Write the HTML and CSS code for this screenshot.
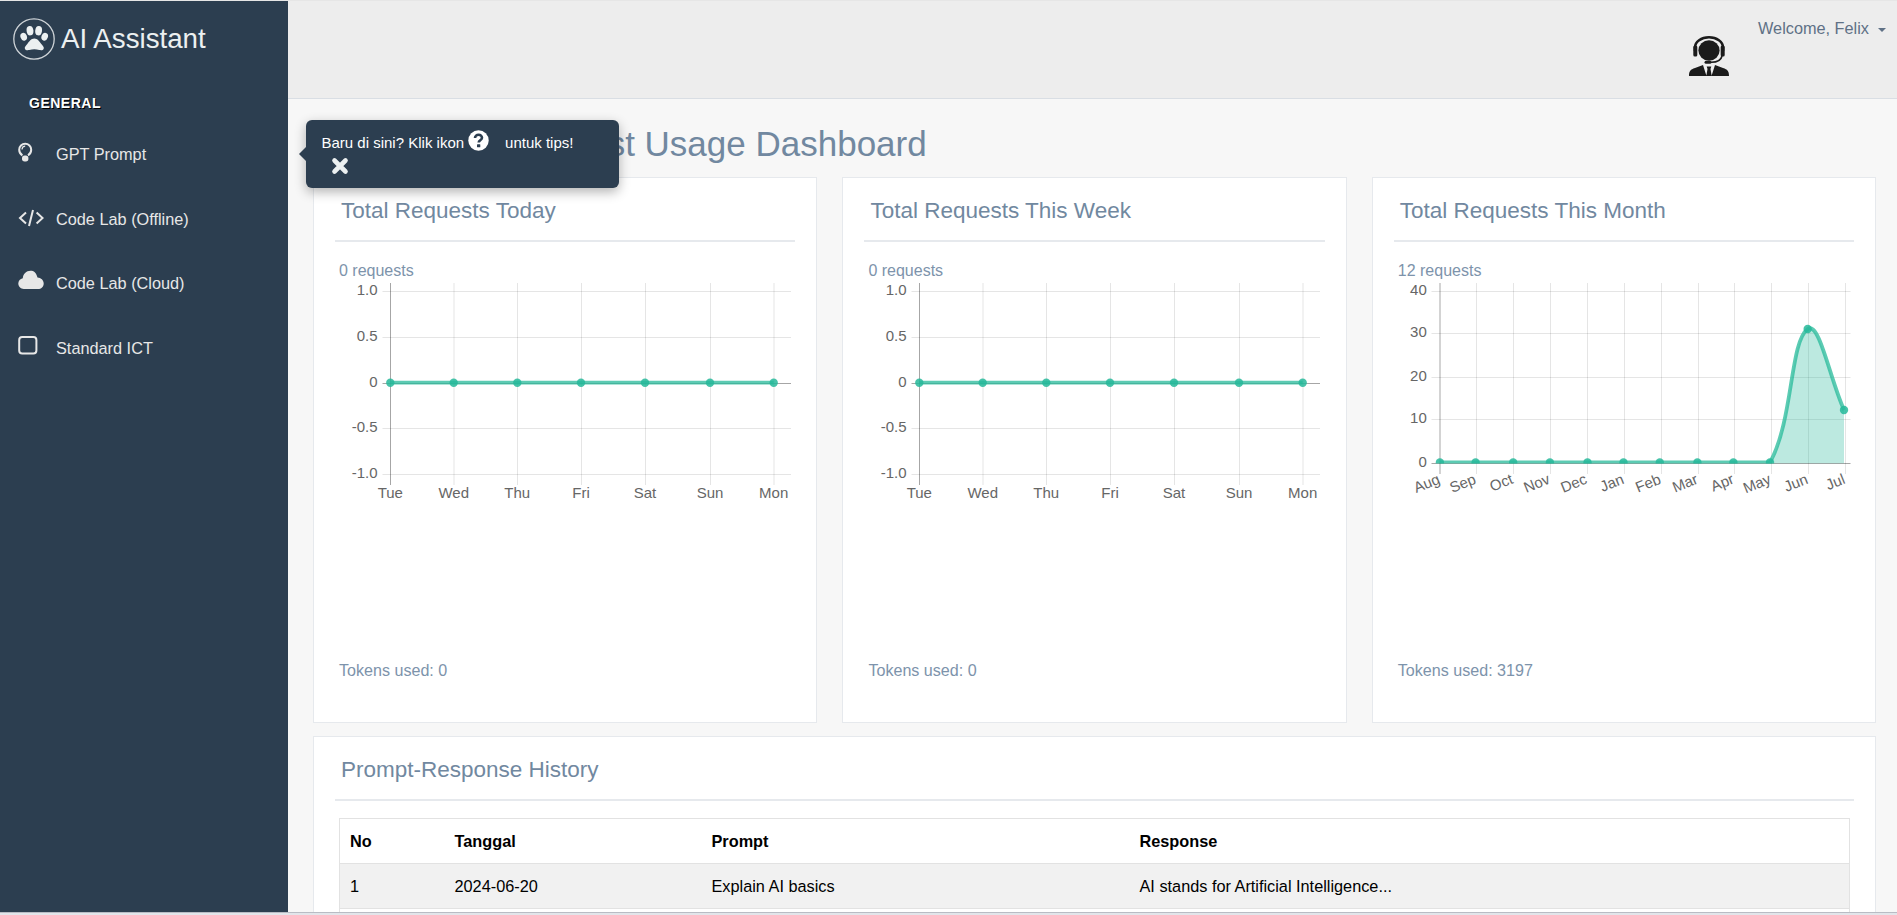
FILE: index.html
```html
<!DOCTYPE html>
<html>
<head>
    <title>AI Assistant</title>
    <meta charset="UTF-8">
    <meta name="viewport" content="width=device-width, initial-scale=1.0">
    <link rel="stylesheet" href="styles.css">
</head>
<body>
<div class="top-edge"></div>
<div class="app">
    <aside class="sidebar">
        <div class="brand">
            <svg class="brand-logo" width="42" height="42" viewBox="0 0 42 42">
                <circle class="brand-ring" cx="21" cy="21" r="20.2"/>
                <ellipse cx="10.7" cy="18.7" rx="3.2" ry="4" transform="rotate(-20 10.7 18.7)"/>
                <ellipse cx="17" cy="12.7" rx="3.4" ry="4.7" transform="rotate(-8 17 12.7)"/>
                <ellipse cx="25.6" cy="12.7" rx="3.4" ry="4.7" transform="rotate(8 25.6 12.7)"/>
                <ellipse cx="31.7" cy="18.7" rx="3.2" ry="4" transform="rotate(20 31.7 18.7)"/>
                <path d="M21.3 20.5c3.3 0 5 3 7 5.5 1.5 1.9 3 3 2.4 4.7-.6 1.6-2.5 1.6-4.4 1.3-1.8-.3-3.3-.7-5-.7s-3.2.4-5 .7c-1.9.3-3.8.3-4.4-1.3-.6-1.7.9-2.8 2.4-4.7 2-2.5 3.7-5.500 7-5.500z"/>
            </svg>
            <span class="brand-name">AI Assistant</span>
        </div>
        <h3 class="menu-title">GENERAL</h3>
        <ul class="menu">
            <li class="menu-item">
                <svg class="menu-icon" width="26" height="26" viewBox="0 0 26 26">
                    <path class="icon-line" d="M4.4 14.4C2.3 13 1.2 11 1.2 8.700a6 6 0 0 1 12 0c0 2.300-1.100 4.300-3.200 5.700"/>
                    <path class="icon-line thin" d="M7.200 5.200a3.300 3.300 0 0 0-3.200 3.200"/>
                    <rect class="icon-fill" x="4" y="14.600" width="6.400" height="5.800" rx="2.600"/>
                </svg>
                <span>GPT Prompt</span>
            </li>
            <li class="menu-item">
                <svg class="menu-icon" width="26" height="26" viewBox="0 0 26 26">
                    <path class="icon-line" d="M8 6.500 2 12l6 5.500M18.600 6.500l6 5.500-6 5.500M15 4l-4 16"/>
                </svg>
                <span>Code Lab (Offline)</span>
            </li>
            <li class="menu-item">
                <svg class="menu-icon" width="26" height="26" viewBox="0 0 26 26">
                    <path class="icon-fill" d="M5.800 19C2.700 19 .3 16.600.3 13.600c0-2.700 1.900-4.900 4.500-5.400C5 4 8.300.7 12.500.7c3.200 0 5.900 1.900 7 6.900 3.500.2 6.200 2.800 6.200 5.800 0 3.100-2.500 5.600-5.700 5.600z"/>
                </svg>
                <span>Code Lab (Cloud)</span>
            </li>
            <li class="menu-item">
                <svg class="menu-icon" width="26" height="26" viewBox="0 0 26 26">
                    <rect class="icon-line" x="1.200" y="2" width="17.200" height="16.400" rx="3"/>
                </svg>
                <span>Standard ICT</span>
            </li>
        </ul>
    </aside>

    <main class="main">
        <header class="topbar">
            <svg class="agent" width="40" height="40" viewBox="0 0 40 40">
                <path class="agent-band" d="M6 15v-3.500a14 10.200 0 0 1 28 0V15"/>
                <rect x="4.300" y="9.500" width="4" height="11" rx="1.500"/>
                <rect x="31.700" y="9.500" width="4" height="11" rx="1.500"/>
                <ellipse cx="20" cy="14.500" rx="10.600" ry="10.200"/>
                <path class="agent-boom" d="M33 20c-1 4.500-6 6.500-12 6.200"/>
                <rect x="15.500" y="24.800" width="7" height="3" rx="1.500"/>
                <path d="M0 40c0-5 1.500-6.500 6-8l8-3 3.500 11zM40 40c0-5-1.500-6.500-6-8l-8-3-3.500 11zM17.700 30.500h4.600l-.8 2.500 1.200 7h-5.400l1.200-7z"/>
            </svg>
            <div class="user-menu">Welcome, Felix<span class="caret"></span></div>
        </header>

        <div class="tip">
            <div class="tip-text">
                <span>Baru di sini? Klik ikon</span>
                <svg class="tip-help" width="21" height="21" viewBox="0 0 21 21">
                    <circle cx="10.500" cy="10.500" r="10.200"/>
                    <path class="tip-help-mark" d="M7 8c0-2 1.600-3.200 3.600-3.200S14 6 14 7.800c0 2.400-3.300 2.500-3.300 4.700"/>
                    <rect class="tip-help-dot" x="9" y="14.200" width="3.300" height="3" rx=".5"/>
                </svg>
                <span>untuk tips!</span>
            </div>
            <svg class="tip-close" width="18" height="18" viewBox="0 0 18 18">
                <path d="M3.500 3.500l11 11M14.500 3.500l-11 11"/>
            </svg>
        </div>

        <section class="content">
            <h1 class="page-title">Request Usage Dashboard</h1>

            <div class="cards">
                <div class="card">
                    <h2 class="card-title">Total Requests Today</h2>
                    <div class="count">0 requests</div>
                    <svg class="chart" width="460" height="230" viewBox="0 0 460 230">
                        <path class="grid" d="M47.500 8.500H456M47.500 54.500H456M47.500 145.500H456M47.500 191.500H456M119 0v202M182.500 0v202M246.500 0v202M310.500 0v202M375.500 0v202M439 0v202"/>
                        <path class="axis" d="M47.500 100.500H456M55.500 0v202"/>
                        <text class="tick end" x="42.500" y="12">1.0</text>
                        <text class="tick end" x="42.500" y="57.700">0.5</text>
                        <text class="tick end" x="42.500" y="103.700">0</text>
                        <text class="tick end" x="42.500" y="149.300">-0.5</text>
                        <text class="tick end" x="42.500" y="195">-1.0</text>
                        <text class="tick mid" x="55.300" y="215">Tue</text>
                        <text class="tick mid" x="118.700" y="215">Wed</text>
                        <text class="tick mid" x="182.300" y="215">Thu</text>
                        <text class="tick mid" x="246" y="215">Fri</text>
                        <text class="tick mid" x="310" y="215">Sat</text>
                        <text class="tick mid" x="375" y="215">Sun</text>
                        <text class="tick mid" x="438.700" y="215">Mon</text>
                        <path class="series" d="M55.300 99.700H438.700"/>
                        <circle class="dot" cx="55.300" cy="99.700" r="4.200"/>
                        <circle class="dot" cx="118.700" cy="99.700" r="4.200"/>
                        <circle class="dot" cx="182.300" cy="99.700" r="4.200"/>
                        <circle class="dot" cx="246" cy="99.700" r="4.200"/>
                        <circle class="dot" cx="310" cy="99.700" r="4.200"/>
                        <circle class="dot" cx="375" cy="99.700" r="4.200"/>
                        <circle class="dot" cx="438.700" cy="99.700" r="4.200"/>
                    </svg>
                    <div class="tokens">Tokens used: 0</div>
                </div>

                <div class="card">
                    <h2 class="card-title">Total Requests This Week</h2>
                    <div class="count">0 requests</div>
                    <svg class="chart" width="460" height="230" viewBox="0 0 460 230">
                        <path class="grid" d="M47.500 8.500H456M47.500 54.500H456M47.500 145.500H456M47.500 191.500H456M119 0v202M182.500 0v202M246.500 0v202M310.500 0v202M375.500 0v202M439 0v202"/>
                        <path class="axis" d="M47.500 100.500H456M55.500 0v202"/>
                        <text class="tick end" x="42.500" y="12">1.0</text>
                        <text class="tick end" x="42.500" y="57.700">0.5</text>
                        <text class="tick end" x="42.500" y="103.700">0</text>
                        <text class="tick end" x="42.500" y="149.300">-0.5</text>
                        <text class="tick end" x="42.500" y="195">-1.0</text>
                        <text class="tick mid" x="55.300" y="215">Tue</text>
                        <text class="tick mid" x="118.700" y="215">Wed</text>
                        <text class="tick mid" x="182.300" y="215">Thu</text>
                        <text class="tick mid" x="246" y="215">Fri</text>
                        <text class="tick mid" x="310" y="215">Sat</text>
                        <text class="tick mid" x="375" y="215">Sun</text>
                        <text class="tick mid" x="438.700" y="215">Mon</text>
                        <path class="series" d="M55.300 99.700H438.700"/>
                        <circle class="dot" cx="55.300" cy="99.700" r="4.200"/>
                        <circle class="dot" cx="118.700" cy="99.700" r="4.200"/>
                        <circle class="dot" cx="182.300" cy="99.700" r="4.200"/>
                        <circle class="dot" cx="246" cy="99.700" r="4.200"/>
                        <circle class="dot" cx="310" cy="99.700" r="4.200"/>
                        <circle class="dot" cx="375" cy="99.700" r="4.200"/>
                        <circle class="dot" cx="438.700" cy="99.700" r="4.200"/>
                    </svg>
                    <div class="tokens">Tokens used: 0</div>
                </div>

                <div class="card">
                    <h2 class="card-title">Total Requests This Month</h2>
                    <div class="count">12 requests</div>
                    <svg class="chart" width="460" height="230" viewBox="0 0 460 230">
                        <defs>
                            <clipPath id="plot-month"><rect x="40" y="0" width="420" height="180.500"/></clipPath>
                        </defs>
                        <path class="grid" d="M37.500 8.500H456.500M37.500 50.500H456.500M37.500 94.500H456.500M37.500 136.500H456.500M82.500 0v191M119.500 0v191M156.500 0v191M193.500 0v191M230.500 0v191M267.500 0v191M304.500 0v191M340.500 0v191M377.500 0v191M414.500 0v191M451.500 0v191"/>
                        <path class="axis" d="M37.500 180.500H456.500M46 0v191"/>
                        <text class="tick end" x="32.800" y="12">40</text>
                        <text class="tick end" x="32.800" y="54.300">30</text>
                        <text class="tick end" x="32.800" y="98.300">20</text>
                        <text class="tick end" x="32.800" y="140.300">10</text>
                        <text class="tick end" x="32.800" y="184.300">0</text>
                        <text class="tick end" transform="translate(47 200) rotate(-22)">Aug</text>
                        <text class="tick end" transform="translate(83 200) rotate(-22)">Sep</text>
                        <text class="tick end" transform="translate(120 200) rotate(-22)">Oct</text>
                        <text class="tick end" transform="translate(157 200) rotate(-22)">Nov</text>
                        <text class="tick end" transform="translate(194 200) rotate(-22)">Dec</text>
                        <text class="tick end" transform="translate(231 200) rotate(-22)">Jan</text>
                        <text class="tick end" transform="translate(268 200) rotate(-22)">Feb</text>
                        <text class="tick end" transform="translate(305 200) rotate(-22)">Mar</text>
                        <text class="tick end" transform="translate(341 200) rotate(-22)">Apr</text>
                        <text class="tick end" transform="translate(378 200) rotate(-22)">May</text>
                        <text class="tick end" transform="translate(415 200) rotate(-22)">Jun</text>
                        <text class="tick end" transform="translate(452 200) rotate(-22)">Jul</text>
                        <g clip-path="url(#plot-month)">
                            <path class="area" d="M376 180.500C399.500 137 395.700 58.800 413.700 46 425.200 37.800 435.500 94.600 450 127V180.500Z"/>
                            <path class="series" d="M45.900 179.500H376C399.500 137 395.700 58.800 413.700 46 425.200 37.800 435.500 94.600 450 127"/>
                            <circle class="dot" cx="45.900" cy="179.500" r="4.200"/>
                            <circle class="dot" cx="81.600" cy="179.500" r="4.200"/>
                            <circle class="dot" cx="119.200" cy="179.500" r="4.200"/>
                            <circle class="dot" cx="155.900" cy="179.500" r="4.200"/>
                            <circle class="dot" cx="193.500" cy="179.500" r="4.200"/>
                            <circle class="dot" cx="229.500" cy="179.500" r="4.200"/>
                            <circle class="dot" cx="265.800" cy="179.500" r="4.200"/>
                            <circle class="dot" cx="303.400" cy="179.500" r="4.200"/>
                            <circle class="dot" cx="339.400" cy="179.500" r="4.200"/>
                            <circle class="dot" cx="376" cy="179.500" r="4.200"/>
                            <circle class="dot" cx="413.700" cy="46" r="4.200"/>
                            <circle class="dot" cx="450" cy="127" r="4.200"/>
                        </g>
                    </svg>
                    <div class="tokens">Tokens used: 3197</div>
                </div>
            </div>

            <div class="panel">
                <h2 class="card-title">Prompt-Response History</h2>
                <table class="history">
                    <thead>
                        <tr>
                            <th class="col-no">No</th>
                            <th class="col-date">Tanggal</th>
                            <th class="col-prompt">Prompt</th>
                            <th>Response</th>
                        </tr>
                    </thead>
                    <tbody>
                        <tr>
                            <td>1</td>
                            <td>2024-06-20</td>
                            <td>Explain AI basics</td>
                            <td>AI stands for Artificial Intelligence...</td>
                        </tr>
                        <tr>
                            <td>&nbsp;</td>
                            <td></td>
                            <td></td>
                            <td></td>
                        </tr>
                    </tbody>
                </table>
            </div>
        </section>
    </main>
</div>
<div class="bottom-edge"></div>
</body>
</html>
```

FILE: styles.css
```css
* {
  box-sizing: border-box;
}
html, body {
  height: 100%;
}
body {
  margin: 0;
  display: flex;
  flex-direction: column;
  overflow: hidden;
  font-family: "Liberation Sans", Arial, sans-serif;
  font-size: 16.3px;
  line-height: 20px;
  color: #73879c;
  background: #f7f7f7;
}
.top-edge {
  height: 1px;
  flex: none;
  background: #e6e6e6;
}
.bottom-edge {
  height: 3px;
  flex: none;
  border-top: 1px solid #b9bcc4;
  background: #e2e5ea;
}
.app {
  flex: 1;
  min-height: 0;
  display: flex;
}

/* sidebar */
.sidebar {
  width: 288px;
  flex: none;
  background: #2c3e50;
  color: #e7e7e7;
}
.brand {
  display: flex;
  align-items: center;
  gap: 6px;
  padding: 17px 0 0 13px;
}
.brand-logo {
  fill: #ecf0f1;
}
.brand-ring {
  fill: none;
  stroke: #cfd4d8;
  stroke-width: 1.3;
}
.brand-name {
  font-size: 27.7px;
  line-height: 42px;
  color: #ecf0f1;
}
.menu-title {
  margin: 33px 0 0 29px;
  font-size: 14px;
  line-height: 20px;
  font-weight: bold;
  letter-spacing: .5px;
  color: #fff;
  text-shadow: 1px 1px #000;
}
.menu {
  list-style: none;
  margin: 8.5px 0 0;
  padding: 0;
}
.menu-item {
  height: 64.7px;
  display: flex;
  align-items: center;
  padding-left: 18px;
}
.menu-icon {
  flex: none;
  margin-right: 12px;
}
.icon-line {
  fill: none;
  stroke: #e7e7e7;
  stroke-width: 2;
}
.icon-line.thin {
  stroke-width: 1.2;
}
.icon-fill {
  fill: #e7e7e7;
}

/* top bar */
.main {
  flex: 1;
  min-width: 0;
  position: relative;
  display: flex;
  flex-direction: column;
}
.topbar {
  height: 98px;
  flex: none;
  display: flex;
  justify-content: flex-end;
  align-items: flex-start;
  padding: 17px 11px 0 0;
  background: #ededed;
  border-bottom: 1px solid #d9dee4;
}
.agent {
  margin: 18px 29px 0 0;
  fill: #1b1b1b;
}
.agent-band {
  fill: none;
  stroke: #1b1b1b;
  stroke-width: 2.6;
}
.agent-boom {
  fill: none;
  stroke: #1b1b1b;
  stroke-width: 1.6;
}
.user-menu {
  color: #5f7186;
  white-space: nowrap;
}
.caret {
  display: inline-block;
  margin-left: 9px;
  vertical-align: middle;
  border-top: 4px solid #5f7186;
  border-left: 4px solid transparent;
  border-right: 4px solid transparent;
}

/* tour tooltip */
.tip {
  position: absolute;
  left: 18px;
  top: 119px;
  width: 313px;
  height: 68px;
  padding: 11px 15.5px 0;
  border-radius: 6px;
  background: #2c3e50;
  color: #fff;
  font-size: 15px;
  box-shadow: 0 4px 12px rgba(0, 0, 0, .3);
  z-index: 10;
}
.tip::before {
  content: "";
  position: absolute;
  left: -7px;
  top: 27px;
  border-top: 7px solid transparent;
  border-bottom: 7px solid transparent;
  border-right: 7px solid #2c3e50;
}
.tip-text {
  display: flex;
  align-items: center;
  height: 24px;
}
.tip-help {
  flex: none;
  margin: -5px 16px 0 4px;
  fill: #fff;
}
.tip-help-mark {
  fill: none;
  stroke: #2c3e50;
  stroke-width: 2.6;
}
.tip-help-dot {
  fill: #2c3e50;
}
.tip-close {
  display: block;
  margin: 2px 0 0 9px;
  fill: none;
  stroke: #ecf0f1;
  stroke-width: 4.6;
  stroke-linecap: round;
}

/* content */
.content {
  flex: 1;
  min-height: 0;
  overflow: hidden;
  padding: 24px 21px 0 25px;
}
.page-title {
  margin: 0 0 12px;
  padding-left: 191.5px;
  font-size: 35px;
  line-height: 42px;
  font-weight: normal;
  color: #7188a0;
}
.cards {
  display: grid;
  grid-template-columns: repeat(3, 1fr);
  column-gap: 25.2px;
  margin-bottom: 13px;
}
.card {
  height: 546px;
  display: flex;
  flex-direction: column;
  padding: 20px 21px 0;
  background: #fff;
  border: 1px solid #e6e9ed;
}
.panel {
  height: 400px;
  padding: 20px 21px 0;
  background: #fff;
  border: 1px solid #e6e9ed;
}
.card-title {
  margin: 0;
  padding: 0 6px 16px;
  font-size: 22.5px;
  line-height: 26px;
  font-weight: normal;
  color: #7188a0;
  border-bottom: 2px solid #e6e9ed;
}
.count {
  margin: 19px 0 2px 4px;
  font-size: 16px;
  color: #7d93ab;
}
.chart {
  display: block;
  flex: none;
  overflow: visible;
}
.tokens {
  margin: 146.5px 0 0 4px;
  font-size: 16.1px;
  color: #7d93ab;
}

/* charts */
.grid {
  fill: none;
  stroke: rgba(0, 0, 0, .1);
}
.axis {
  fill: none;
  stroke: rgba(0, 0, 0, .35);
}
.tick {
  font-size: 15px;
  fill: #666;
}
.tick.end {
  text-anchor: end;
}
.tick.mid {
  text-anchor: middle;
}
.series {
  fill: none;
  stroke: rgba(38, 185, 154, .75);
  stroke-width: 3.8;
}
.area {
  fill: rgba(38, 185, 154, .31);
}
.dot {
  fill: rgba(38, 185, 154, .85);
}

/* history table */
.history {
  width: 1511px;
  margin: 17px 4px 0;
  border-collapse: collapse;
  table-layout: fixed;
  color: #000;
  border: 1px solid #e2e2e2;
}
.history th,
.history td {
  padding: 12px 10px;
  text-align: left;
  border-bottom: 1px solid #e2e2e2;
}
.history tbody tr:nth-child(odd) {
  background: #f1f1f1;
}
.col-no {
  width: 105px;
}
.col-date {
  width: 257px;
}
.col-prompt {
  width: 428px;
}
```
